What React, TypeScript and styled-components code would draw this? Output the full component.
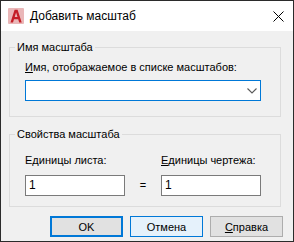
import React from "react";
import styled, { createGlobalStyle } from "styled-components";

const Global = createGlobalStyle`
  html, body { margin: 0; padding: 0; background: #ffffff; }
  body { font-family: "Liberation Sans", Arial, sans-serif; font-size: 11px; color: #000; }
  * { box-sizing: border-box; }
`;

const Window = styled.div`
  width: 294px;
  height: 242px;
  border: 1px solid #2b2b2b;
  background: #f0f0f0;
  display: flex;
  flex-direction: column;
`;

const TitleBar = styled.div`
  height: 30px;
  flex: none;
  background: #ffffff;
  display: flex;
  align-items: center;
  padding-left: 7px;
  padding-right: 9px;
`;

const TitleText = styled.span`
  flex: 1;
  margin-left: 6px;
  font-size: 12px;
  line-height: 15px;
  color: #000;
`;

const Client = styled.div`
  flex: 1;
  display: flex;
  flex-direction: column;
  padding: 9px 0 0 8px;
`;

const Group = styled.fieldset<{ $mt?: number }>`
  margin: ${(p) => p.$mt ?? 0}px 0 0 0;
  padding: 0;
  width: 272px;
  border: 1px solid #dcdcdc;
  min-width: 0;
`;

const Legend = styled.legend`
  margin-left: 5px;
  padding: 0 2px;
  font-size: 11px;
  line-height: 14px;
`;

const GroupBody = styled.div<{ $pt: number; $pb: number }>`
  padding: ${(p) => p.$pt}px 0 ${(p) => p.$pb}px 15px;
`;

const Label = styled.div`
  font-size: 11px;
  line-height: 15px;
  white-space: nowrap;
`;

const U = styled.span`
  text-decoration: underline;
  text-underline-offset: 1px;
`;

const Combo = styled.div`
  margin-top: 5px;
  width: 236px;
  height: 21px;
  border: 1px solid #0078d7;
  background: #ffffff;
  display: flex;
  align-items: center;
  justify-content: flex-end;
  padding-right: 3px;
`;

const Row = styled.div`
  display: flex;
  align-items: center;
`;

const Column = styled.div`
  width: 100px;
  display: flex;
  flex-direction: column;
`;

const Equals = styled.div`
  width: 36px;
  text-align: center;
  font-size: 11px;
  line-height: 15px;
  margin-top: 22px;
`;

const Input = styled.div`
  margin-top: 7px;
  width: 100px;
  height: 21px;
  border: 1px solid #7a7a7a;
  background: #ffffff;
  padding-left: 3px;
  font-size: 12px;
  line-height: 19px;
`;

const Buttons = styled.div`
  margin-top: 9px;
  display: flex;
  gap: 7px;
  padding-left: 41px;
`;

const Button = styled.div<{ $variant: "default" | "hover" | "normal" }>`
  width: 73px;
  height: 21px;
  display: flex;
  align-items: center;
  justify-content: center;
  font-size: 11px;
  background: ${(p) => (p.$variant === "hover" ? "#e5f1fb" : "#e1e1e1")};
  border: ${(p) =>
    p.$variant === "default"
      ? "2px solid #0078d7"
      : p.$variant === "hover"
      ? "1px solid #0078d7"
      : "1px solid #adadad"};
`;

const Logo = () => (
  <svg width="16" height="16" viewBox="0 0 16 16">
    <rect x="0" y="0" width="16" height="16" rx="1" fill="#eab7b8" />
    <path d="M2.5 14.5 L6.6 1.8 L9.6 1.8 L13.7 14.5 L11.2 14.5 L10.2 11.2 L6 11.2 L5 14.5 Z M6.7 9 L9.5 9 L8.1 4.4 Z" fill="#c41e26" fillRule="evenodd" />
  </svg>
);

const CloseIcon = () => (
  <svg width="11" height="11" viewBox="0 0 11 11">
    <path d="M0.5 0.5 L10.5 10.5 M10.5 0.5 L0.5 10.5" stroke="#000" strokeWidth="1" />
  </svg>
);

const Chevron = () => (
  <svg width="10" height="6" viewBox="0 0 10 6">
    <path d="M0.5 0.5 L5 5 L9.5 0.5" stroke="#5a5a5a" strokeWidth="1.1" fill="none" />
  </svg>
);

export default function App() {
  return (
    <>
      <Global />
      <Window>
        <TitleBar>
          <Logo />
          <TitleText>Добавить масштаб</TitleText>
          <CloseIcon />
        </TitleBar>
        <Client>
          <Group>
            <Legend>Имя масштаба</Legend>
            <GroupBody $pt={6} $pb={15}>
              <Label>
                <U>И</U>мя, отображаемое в списке масштабов:
              </Label>
              <Combo>
                <Chevron />
              </Combo>
            </GroupBody>
          </Group>
          <Group $mt={10}>
            <Legend>Свойства масштаба</Legend>
            <GroupBody $pt={12} $pb={10}>
              <Row>
                <Column>
                  <Label>
                    Е<U>д</U>иницы листа:
                  </Label>
                  <Input>1</Input>
                </Column>
                <Equals>=</Equals>
                <Column>
                  <Label>
                    <U>Е</U>диницы чертежа:
                  </Label>
                  <Input>1</Input>
                </Column>
              </Row>
            </GroupBody>
          </Group>
          <Buttons>
            <Button $variant="default">OK</Button>
            <Button $variant="hover">Отмена</Button>
            <Button $variant="normal">
              <span>
                <U>С</U>правка
              </span>
            </Button>
          </Buttons>
        </Client>
      </Window>
    </>
  );
}
